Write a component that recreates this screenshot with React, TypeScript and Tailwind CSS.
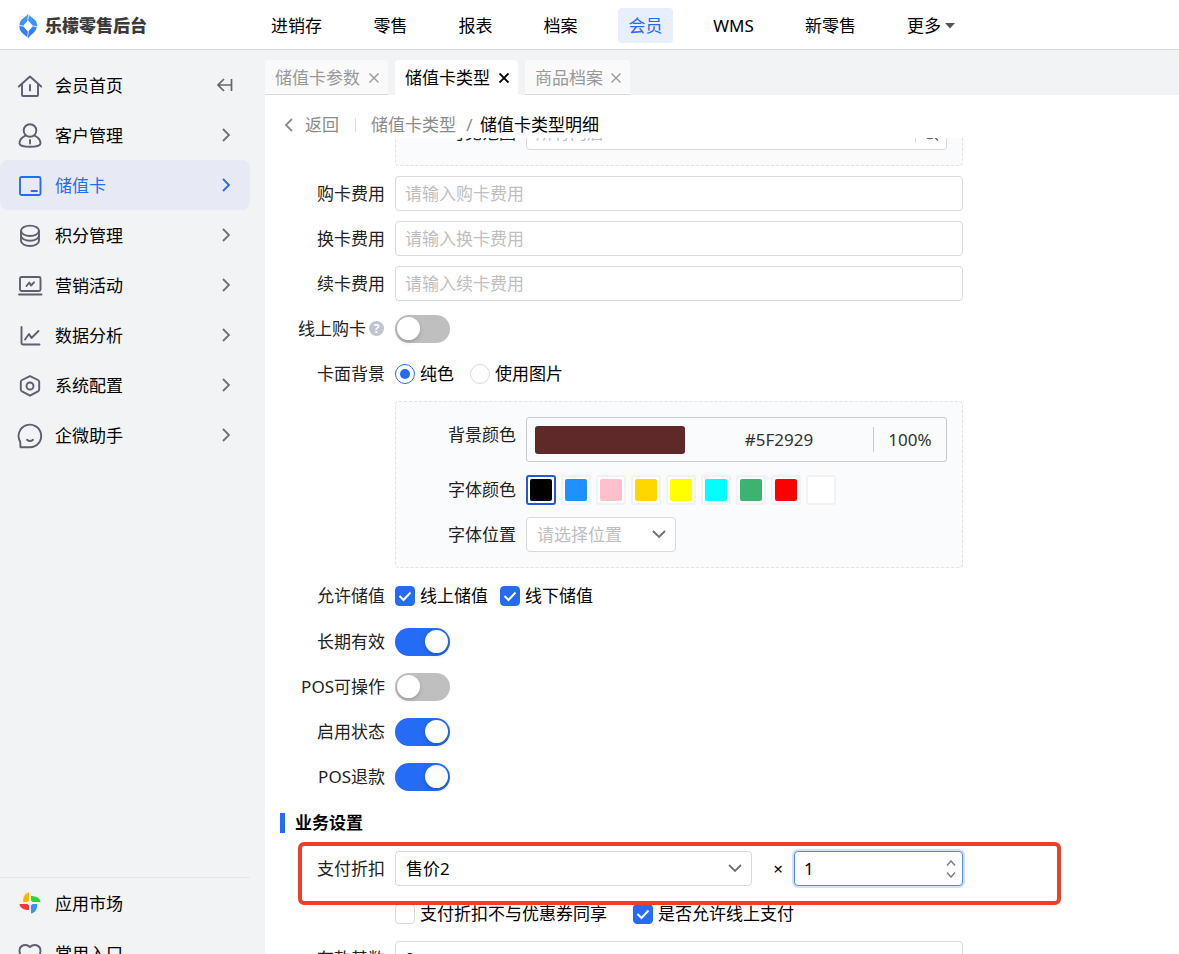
import { useState } from "react";
import type { ReactNode } from "react";
import clsx from "clsx";

const navItems = [
  { name: "进销存", width: "w-[73px]" },
  { name: "零售", width: "w-[55px]" },
  { name: "报表", width: "w-[55px]" },
  { name: "档案", width: "w-[55px]" },
  { name: "会员", width: "w-[55px]", active: true },
  { name: "WMS", width: "w-[61px]" },
  { name: "新零售", width: "w-[73px]" },
];

const menuItems = [
  {
    name: "会员首页",
    icon: (
      <>
        <path d="M.8 13.500 12 3.500l11.200 10" />
        <path d="M4 11.500V22a1 1 0 0 0 1 1h14a1 1 0 0 0 1-1V11.500M12 12v5.500" />
      </>
    ),
  },
  {
    name: "客户管理",
    icon: (
      <>
        <circle cx="12" cy="7.500" r="6.300" />
        <path d="M7 12.800C3.500 14.500 1.500 18 1.500 20.500c0 2 4.500 3.300 10.500 3.300s10.500-1.300 10.500-3.300c0-2.500-2-6-5.500-7.700M12 17v3.500" />
      </>
    ),
  },
  {
    name: "储值卡",
    active: true,
    icon: (
      <>
        <rect x="2" y="4" width="20.500" height="18" rx="1.500" />
        <path d="M13.500 18h5.500" />
      </>
    ),
  },
  {
    name: "积分管理",
    icon: (
      <>
        <ellipse cx="12" cy="7.800" rx="9" ry="5.200" />
        <path d="M3 7.800v4.700c0 3 4 5.200 9 5.200s9-2.200 9-5.200V7.800" />
        <path d="M3 13v4.800c0 3 4 5.200 9 5.200s9-2.200 9-5.200V13" />
      </>
    ),
  },
  {
    name: "营销活动",
    icon: (
      <>
        <rect x="2" y="4" width="20.500" height="14" rx="1.500" />
        <path d="M1 21.500h22.500M8.500 13l2.800-3.500 1.700 3 3-3.200" />
      </>
    ),
  },
  {
    name: "数据分析",
    icon: (
      <>
        <path d="M3.500 4v16a1.500 1.500 0 0 0 1.500 1.500h16.500" />
        <path d="m7 16.500 4-5.500 2.500 4 7-7" />
      </>
    ),
  },
  {
    name: "系统配置",
    icon: (
      <>
        <path d="M12 3.200 20 7c.8.500 1.200 1 1.200 2v7.400c0 1-.4 1.500-1.200 2l-8 4.300-8-4.300c-.8-.5-1.200-1-1.200-2V9c0-1 .4-1.500 1.200-2z" />
        <circle cx="12" cy="13" r="3.500" />
      </>
    ),
  },
  {
    name: "企微助手",
    icon: (
      <>
        <path d="M2.500 24.300h9.500A11.300 11.300 0 1 0 2.200 18.800z" />
        <path d="M9 16.800c1.800 1.500 4.200 1.500 6 0" />
      </>
    ),
  },
];

const fontColors = [
  { name: "黑色", className: "bg-black" },
  { name: "蓝色", className: "bg-[#1e90ff]" },
  { name: "粉色", className: "bg-[#ffc0cb]" },
  { name: "金色", className: "bg-[#ffd700]" },
  { name: "黄色", className: "bg-[#ffff00]" },
  { name: "青色", className: "bg-[#00ffff]" },
  { name: "绿色", className: "bg-[#3cb371]" },
  { name: "红色", className: "bg-[#ff0000]" },
  { name: "白色", className: "bg-white" },
];

function MenuIcon({ children }: { children: ReactNode }) {
  return (
    <svg
      viewBox="0 0 24 24"
      className="size-6 shrink-0 overflow-visible"
      fill="none"
      stroke="currentColor"
      strokeWidth="1.900"
      strokeLinecap="round"
      strokeLinejoin="round"
    >
      {children}
    </svg>
  );
}

function Chevron({ className }: { className?: string }) {
  return (
    <svg viewBox="0 0 14 14" className={clsx("size-[14px]", className)} fill="none" stroke="currentColor" strokeWidth="1.800">
      <path d="m1 4 6 6 6-6" />
    </svg>
  );
}

function Row({ label, id, children }: { label: ReactNode; id?: string; children: ReactNode }) {
  return (
    <div className="flex items-start gap-[10px]">
      <label htmlFor={id} className="flex h-[35px] w-[105px] shrink-0 items-center justify-end whitespace-nowrap text-[#222]">
        {label}
      </label>
      {children}
    </div>
  );
}

function TextInput({ id, placeholder, value }: { id: string; placeholder?: string; value?: string }) {
  return (
    <input
      id={id}
      placeholder={placeholder}
      defaultValue={value}
      className="h-[35px] w-full max-w-[568px] rounded border border-[#d9d9d9] bg-white px-[9px] text-black outline-none placeholder:text-[#bfbfbf]"
    />
  );
}

function Toggle({ id, on }: { id: string; on?: boolean }) {
  return (
    <div className="flex h-[35px] items-center">
      <input
        id={id}
        type="checkbox"
        role="switch"
        defaultChecked={on}
        className="flex h-7 w-[55px] appearance-none items-center rounded-full bg-[#bfbfbf] px-[2px] before:size-[23px] before:rounded-full before:bg-white before:shadow-[0_2px_4px_rgba(0,35,11,0.2)] checked:justify-end checked:bg-[#246bf5]"
      />
    </div>
  );
}

function Check({ label, on, className }: { label: string; on?: boolean; className?: string }) {
  return (
    <label className={clsx("flex items-center gap-[5px] whitespace-nowrap text-black", className)}>
      <span className="grid">
        <input
          type="checkbox"
          defaultChecked={on}
          className="peer col-start-1 row-start-1 size-5 appearance-none rounded border border-[#d9d9d9] bg-white checked:border-[#246bf5] checked:bg-[#246bf5]"
        />
        <svg viewBox="0 0 20 20" className="pointer-events-none invisible col-start-1 row-start-1 size-5 peer-checked:visible" fill="none" stroke="white" strokeWidth="2">
          <path d="m4.500 10 4 4L15.500 6.500" />
        </svg>
      </span>
      {label}
    </label>
  );
}

function Radio({ label, on, className }: { label: string; on?: boolean; className?: string }) {
  return (
    <label className={clsx("flex items-center gap-[5px] whitespace-nowrap text-black", className)}>
      <input
        type="radio"
        name="card-face"
        defaultChecked={on}
        className="flex size-5 appearance-none items-center justify-center rounded-full border border-[#d9d9d9] bg-white checked:border-[#246bf5] checked:before:size-[10px] checked:before:rounded-full checked:before:bg-[#246bf5]"
      />
      {label}
    </label>
  );
}

function Header() {
  return (
    <header className="flex h-[50px] shrink-0 items-center border-b border-[#d5d8dc] bg-white pt-[2px]">
      <div className="flex w-[260px] shrink-0 items-center gap-2 pl-[19px]">
        <svg viewBox="0 0 18 26" className="h-[26px] w-[18px]">
          <defs>
            <linearGradient id="logo" x1="0" y1="0" x2="0" y2="1">
              <stop offset="0" stopColor="#4aa0ff" />
              <stop offset="1" stopColor="#2a72f5" />
            </linearGradient>
          </defs>
          <path
            fill="url(#logo)"
            fillRule="evenodd"
            d="M9 .5c1.500 3 6.500 5 8.300 8.300 1.200 2.600.7 6-.8 8.600-1.700 3-5.500 4.600-7.500 8.100-1.500-3-6-4.700-7.600-7.800C0 15 0 11.300 1.300 8.600 3 5.200 7.500 3.700 9 .5zM9 7.300 4 13 9 18.700 14 13z"
          />
          <path d="m9.800 1-1.300 6.800M9.500 18.300 8.300 25M0 12.300l4 .7M14 13l4 .7" stroke="white" strokeWidth=".8" />
        </svg>
        <span className="text-[17px] font-black text-[#3a3a3a]">乐檬零售后台</span>
      </div>
      <nav className="flex gap-[30px]">
        {navItems.map((item) => (
          <a
            key={item.name}
            href="#"
            className={clsx(
              "flex h-[35px] shrink-0 items-center justify-center rounded",
              item.width,
              item.active ? "bg-[#e7eefc] text-[#246bf5]" : "text-black",
            )}
          >
            {item.name}
          </a>
        ))}
        <button className="flex h-[35px] items-center gap-1 pl-[10px] text-black">
          更多
          <svg viewBox="0 0 10 6" className="h-[6px] w-[10px]" fill="#555">
            <path d="M0 0h10L5 5.500z" />
          </svg>
        </button>
      </nav>
    </header>
  );
}

function Sidebar() {
  return (
    <aside className="flex w-[265px] shrink-0 flex-col pt-[10px] pr-[15px]">
      {menuItems.map((item, i) => (
        <a
          key={item.name}
          href="#"
          className={clsx(
            "flex h-[50px] shrink-0 items-center gap-[13px] rounded-lg pr-[17px] pl-[18px]",
            item.active ? "bg-[#e7eaf4] text-[#246bf5]" : "text-[#5c5f6e]",
          )}
        >
          <MenuIcon>{item.icon}</MenuIcon>
          <span className={clsx("grow pt-[2px]", !item.active && "text-black")}>{item.name}</span>
          {i === 0 ? (
            <svg viewBox="0 0 16 14" className="h-[14px] w-4 text-[#666]" fill="none" stroke="currentColor" strokeWidth="1.700">
              <path d="M7 1 1 7l6 6M1 7h13.500M14.500 1v12" />
            </svg>
          ) : (
            <Chevron className={clsx("-rotate-90", !item.active && "text-[#707070]")} />
          )}
        </a>
      ))}
      <div className="mt-auto h-[77px] shrink-0 overflow-hidden border-t border-[#e5e7ea]">
        <a href="#" className="flex h-[50px] items-center gap-[13px] pl-[18px] text-black">
          <svg viewBox="0 0 24 24" className="size-6">
            <path fill="#ffb400" d="M11 1.500V9.500L9.500 11H5C5 5.500 7 2 11 1.500z" />
            <path fill="#2bd62f" d="M13 5c5 0 9 2 9.500 6h-8L13 9.500z" />
            <path fill="#ff3438" d="M11 19c-5 0-9-2-9.500-6h8L11 14.500z" />
            <path fill="#3592ff" d="M13 22.500v-8l1.500-1.500h4.700c0 5.500-2.200 9-6.200 9.500z" />
          </svg>
          <span className="pt-[2px]">应用市场</span>
        </a>
        <a href="#" className="flex h-[50px] items-center gap-[13px] pl-[18px] text-[#5c5f6e]">
          <MenuIcon>
            <path d="M12 6C8.500 2.500 1.500 3.500 1.500 10c0 6 7 10 10.500 12 3.500-2 10.500-6 10.500-12 0-6.500-7-7.500-10.500-4z" />
          </MenuIcon>
          <span className="pt-[2px] text-black">常用入口</span>
        </a>
      </div>
    </aside>
  );
}

function Tabs() {
  const tabs = [
    { name: "储值卡参数", width: "w-[123px]" },
    { name: "储值卡类型", width: "w-[123px]", active: true },
    { name: "商品档案", width: "w-[105px]" },
  ];
  return (
    <div className="flex shrink-0 gap-[7px] pt-[10px]">
      {tabs.map((tab) => (
        <div
          key={tab.name}
          className={clsx(
            "flex h-[35px] items-center justify-between rounded-t border-b pt-[2px] pr-[9px] pl-[10px]",
            tab.width,
            tab.active ? "border-white bg-white text-black" : "border-[#d9d9d9] bg-[#fafafa] text-[#999]",
          )}
        >
          <a href="#">{tab.name}</a>
          <button aria-label="关闭">
            <svg viewBox="0 0 10 10" className="size-[10px]" fill="none" stroke="currentColor" strokeWidth={tab.active ? "1.900" : "1.400"}>
              <path d="m.5.5 9 9m0-9-9 9" />
            </svg>
          </button>
        </div>
      ))}
    </div>
  );
}

function CardFacePanel() {
  const [color, setColor] = useState("黑色");
  return (
    <div className="ml-[115px] flex max-w-[568px] flex-col gap-[10px] rounded border border-dashed border-[#e0e2e5] bg-[#fafbfd] p-[15px]">
      <Row label="背景颜色" id="bg-color">
        <div className="flex h-[45px] w-full items-center rounded-[3px] border border-[#c8cacf] pl-2 text-[#333]">
          <div className="h-7 w-[150px] shrink-0 rounded-[3px] bg-[#5f2929]" />
          <input id="bg-color" defaultValue="#5F2929" className="w-full min-w-0 text-center outline-none" />
          <input aria-label="不透明度" defaultValue="100%" className="h-[25px] w-[73px] shrink-0 border-l border-[#c8cacf] text-center outline-none" />
        </div>
      </Row>
      <Row label="字体颜色">
        <div className="flex h-[35px] items-center gap-[5px]">
          {fontColors.map((item) => (
            <button
              key={item.name}
              type="button"
              aria-label={item.name}
              onClick={() => setColor(item.name)}
              className={clsx("size-[30px] rounded-[3px] border-2 bg-white p-[2px]", item.name === color ? "border-[#2458dc]" : "border-[#f2f2f2]")}
            >
              <span className={clsx("block size-[22px] rounded-[2px]", item.className)} />
            </button>
          ))}
        </div>
      </Row>
      <Row label="字体位置" id="font-position">
        <div className="relative">
          <select id="font-position" className="h-[35px] w-[150px] appearance-none rounded border border-[#d9d9d9] bg-white px-[10px] text-[#bfbfbf] outline-none">
            <option>请选择位置</option>
          </select>
          <Chevron className="pointer-events-none absolute top-[10px] right-[10px] text-[#707070]" />
        </div>
      </Row>
    </div>
  );
}

function StoreScopePanel() {
  return (
    <div className="ml-[115px] max-w-[568px] rounded border border-dashed border-[#e0e2e5] bg-[#fafbfd] p-[15px]">
      <Row label="可见范围" id="scope">
        <div className="flex h-[35px] w-full items-center rounded border border-[#d9d9d9] bg-white">
          <input id="scope" placeholder="所有门店" className="w-full min-w-0 px-[9px] outline-none placeholder:text-[#bfbfbf]" />
          <button type="button" aria-label="搜索" className="flex h-5 w-[31px] shrink-0 items-center justify-center border-l border-[#d9d9d9] text-[#666]">
            <svg viewBox="0 0 16 16" className="size-4" fill="none" stroke="currentColor" strokeWidth="1.600">
              <circle cx="7" cy="7.500" r="6" />
              <path d="m11.500 12 3.500 3.500" />
            </svg>
          </button>
        </div>
      </Row>
    </div>
  );
}

export default function App() {
  return (
    <div className="flex h-screen flex-col overflow-hidden bg-[#f1f3f5] font-['Noto_Sans','Noto_Sans_CJK_SC',sans-serif] text-[17px] leading-6">
      <Header />
      <div className="flex min-h-0 grow">
        <Sidebar />
        <main className="flex min-w-0 grow flex-col">
          <Tabs />
          <div className="flex min-h-0 grow flex-col bg-white">
            <div className="flex h-[43px] shrink-0 items-center pt-4 pl-[17px] text-[#8c8c8c]">
              <button className="flex w-[58px] items-center gap-[9px]">
                <Chevron className="rotate-90" />
                返回
              </button>
              <span className="ml-[15px] h-[14px] w-px bg-[#ddd]" />
              <a href="#" className="ml-[15px] w-[88px]">储值卡类型</a>
              <span className="w-[21px] text-center">/</span>
              <span className="text-black">储值卡类型明细</span>
            </div>
            <form className="min-h-0 grow overflow-hidden pl-[15px]">
              {/* the form is scrolled so that only the foot of the store panel shows */}
              <div className="-mt-[39px] flex flex-col gap-[10px] pr-[15px]">
                <StoreScopePanel />
                <Row label="购卡费用" id="buy-fee">
                  <TextInput id="buy-fee" placeholder="请输入购卡费用" />
                </Row>
                <Row label="换卡费用" id="swap-fee">
                  <TextInput id="swap-fee" placeholder="请输入换卡费用" />
                </Row>
                <Row label="续卡费用" id="renew-fee">
                  <TextInput id="renew-fee" placeholder="请输入续卡费用" />
                </Row>
                <Row
                  id="online-buy"
                  label={
                    <>
                      线上购卡
                      <span className="mr-px ml-[3px] flex size-[15px] items-center justify-center rounded-full bg-[#c0c4cf] text-xs font-bold text-white">?</span>
                    </>
                  }
                >
                  <Toggle id="online-buy" />
                </Row>
                <Row label="卡面背景">
                  <div className="flex h-[35px] items-center gap-[15px]">
                    <Radio label="纯色" className="w-[60px]" on />
                    <Radio label="使用图片" />
                  </div>
                </Row>
                <CardFacePanel />
                <Row label="允许储值">
                  <div className="flex h-9 items-center gap-[10px]">
                    <Check label="线上储值" className="w-[95px]" on />
                    <Check label="线下储值" on />
                  </div>
                </Row>
                <Row label="长期有效" id="long-term">
                  <Toggle id="long-term" on />
                </Row>
                <Row label="POS可操作" id="pos-use">
                  <Toggle id="pos-use" />
                </Row>
                <Row label="启用状态" id="enabled">
                  <Toggle id="enabled" on />
                </Row>
                <Row label="POS退款" id="pos-refund">
                  <Toggle id="pos-refund" on />
                </Row>
                <h2 className="flex h-[37px] items-center gap-[10px] font-bold text-black">
                  <span className="h-5 w-[5px] bg-[#246bf5]" />
                  业务设置
                </h2>
                <div className="relative max-w-[781px]">
                  <Row label="支付折扣" id="discount">
                    <div className="flex w-full max-w-[568px] items-center">
                      <div className="relative grow">
                        <select id="discount" className="h-[35px] w-full appearance-none rounded border border-[#d9d9d9] bg-white px-[10px] text-black outline-none">
                          <option>售价2</option>
                        </select>
                        <Chevron className="pointer-events-none absolute top-[10px] right-[10px] text-[#707070]" />
                      </div>
                      <span className="w-[42px] pl-[10px] text-center text-black">×</span>
                      <div className="flex h-[35px] w-[169px] items-center rounded border border-[#4a8df8] bg-white pr-[6px] shadow-[0_0_0_2px_rgba(36,107,245,0.2)]">
                        <input aria-label="折扣系数" defaultValue="1" className="w-full min-w-0 px-[9px] text-black outline-none" />
                        <span className="flex flex-col gap-[6px] text-[#808080]">
                          <button type="button" aria-label="增加">
                            <svg viewBox="0 0 10 6" className="h-[6px] w-[10px]" fill="none" stroke="currentColor" strokeWidth="1.500">
                              <path d="m1 5.500 4-4.500 4 4.500" />
                            </svg>
                          </button>
                          <button type="button" aria-label="减少">
                            <svg viewBox="0 0 10 6" className="h-[6px] w-[10px]" fill="none" stroke="currentColor" strokeWidth="1.500">
                              <path d="m1 .5 4 4.500 4-4.500" />
                            </svg>
                          </button>
                        </span>
                      </div>
                    </div>
                  </Row>
                  {/* marker drawn over the discount row */}
                  <div className="pointer-events-none absolute -top-[9px] right-0 -bottom-[19px] left-[18px] z-10 rounded-md border-4 border-[#ee4026]" />
                </div>
                <div className="ml-[115px] flex h-[35px] items-center gap-5">
                  <Check label="支付折扣不与优惠券同享" className="w-[218px]" />
                  <Check label="是否允许线上支付" on />
                </div>
                <Row label="存款基数" id="base">
                  <TextInput id="base" value="0" />
                </Row>
              </div>
            </form>
          </div>
        </main>
      </div>
    </div>
  );
}
